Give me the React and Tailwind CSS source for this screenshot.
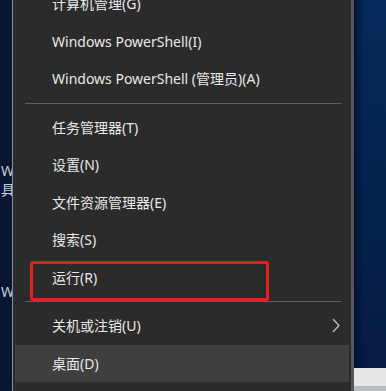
export default function App() {
  let items1 = ["计算机管理(G)", "Windows PowerShell(I)", "Windows PowerShell (管理员)(A)"];
  let items2 = ["任务管理器(T)", "设置(N)", "文件资源管理器(E)", "搜索(S)"];

  return (
    <div
      className="w-[386px] h-[391px] overflow-hidden flex bg-[#07183a] text-[14px] text-[#e8e8e8]"
      style={{ fontFamily: '"Noto Sans", "Noto Sans CJK SC", sans-serif' }}
    >
      {/* desktop strip on the left */}
      <div className="w-[12px] shrink-0 bg-[#081533] overflow-hidden flex flex-col pl-[1px] text-[14px] leading-[16px] text-[#c9ced8]">
        <span className="mt-[163px]">W</span>
        <span className="mt-[3px]">具</span>
        <span className="mt-[86px]">W</span>
      </div>

      {/* context menu */}
      <div className="w-[342px] shrink-0 bg-[#2b2b2b] border-l border-l-[#8d8d8d] border-r-[3px] border-r-[#565656] relative flex flex-col">
        <div className="-mt-[15px]">
          {items1.map((t) => (
            <div key={t} className="h-[37.5px] mx-[2px] pl-[37px] flex items-center whitespace-nowrap">
              {t}
            </div>
          ))}
        </div>
        <div className="py-[5px] pl-[12px] pr-[10px]">
          <div className="h-px bg-[#5e5e5e]"></div>
        </div>
        {items2.map((t) => (
          <div key={t} className="h-[37.5px] mx-[2px] pl-[37px] flex items-center whitespace-nowrap">
            {t}
          </div>
        ))}
        <div className="h-[37.5px] mx-[2px] pl-[37px] flex items-center relative">
          运行(R)
          <div className="absolute left-[15px] top-[2px] w-[239px] h-[40px] border-[3px] border-[#e3201d] rounded-[3px]"></div>
        </div>
        <div className="py-[5px] pl-[12px] pr-[10px]">
          <div className="h-px bg-[#5e5e5e]"></div>
        </div>
        <div className="h-[37.5px] mx-[2px] pl-[37px] pr-[9px] flex items-center justify-between">
          <span>关机或注销(U)</span>
          <svg width="8" height="15" viewBox="0 0 8 15">
            <polyline points="1,1 7,7.5 1,14" fill="none" stroke="#bdbdbd" strokeWidth="1.3" />
          </svg>
        </div>
        <div className="h-[37.5px] mx-[2px] pl-[37px] flex items-center bg-[#3f3f3f]">
          桌面(D)
        </div>
      </div>

      {/* desktop on the right */}
      <div className="flex-1 flex flex-col bg-gradient-to-b from-[#062a5c] via-[#05224f] to-[#061a42]">
        <div className="flex-1 bg-gradient-to-r from-[#031233] to-transparent w-[10px]"></div>
        <div className="h-[23px] bg-[#e6e7e9] flex flex-col justify-end">
          <div className="h-[5px] bg-[#b8bbc0]"></div>
        </div>
      </div>
    </div>
  );
}
